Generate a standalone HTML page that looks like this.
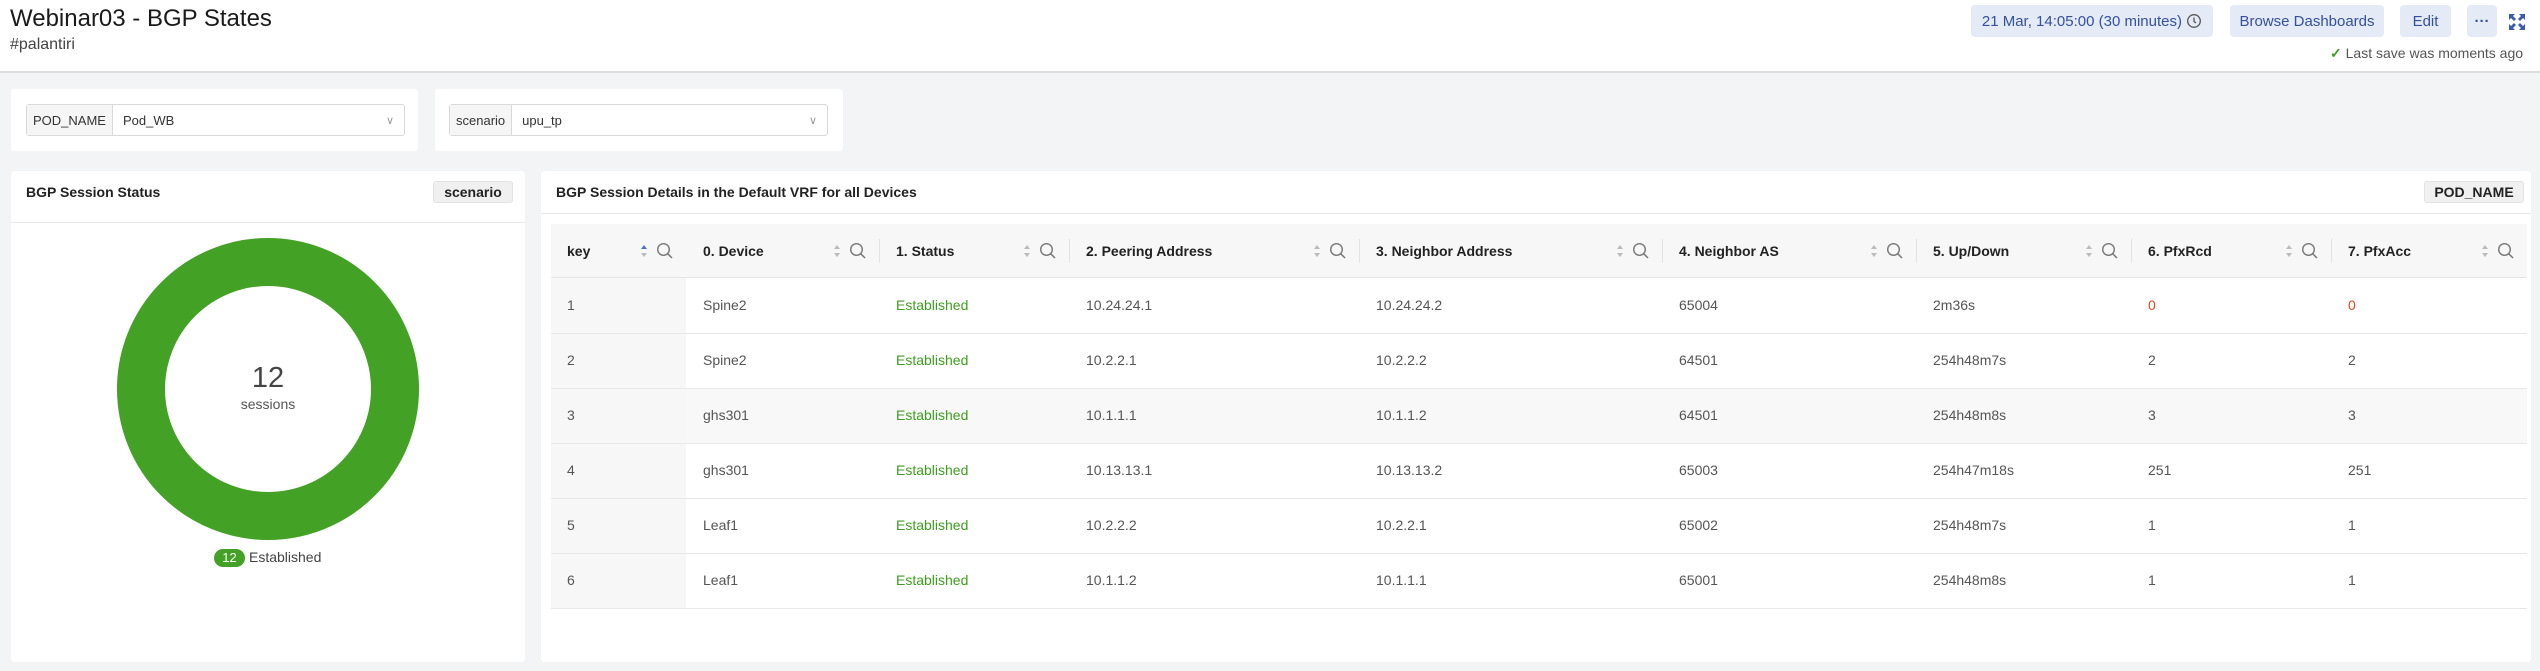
<!DOCTYPE html>
<html><head><meta charset="utf-8"><style>
*{box-sizing:border-box;margin:0;padding:0}
body{width:2540px;height:671px;background:#f3f4f6;font-family:"Liberation Sans",sans-serif;position:relative;overflow:hidden;color:#333}
.a{position:absolute}
.hdr{left:0;top:0;width:2540px;height:73px;background:#fff;border-bottom:2px solid #dcdcdf}
.btn{background:#e4eaf6;color:#34509e;border-radius:4px;font-size:15px;display:flex;align-items:center;justify-content:center;height:32px;top:5px}
.card{background:#fff;border-radius:4px}
.inp{border:1px solid #d9d9d9;border-radius:3px;height:32px;top:104px;background:#fff;font-size:13px}
.lbl{background:#f5f5f5;border-right:1px solid #d9d9d9;height:100%;display:flex;align-items:center;padding:0 6px;color:#333}
.badge{background:#f0f0f0;border:1px solid #e3e3e3;border-radius:3px;font-size:14px;font-weight:bold;color:#222;height:22px;top:181px;display:flex;align-items:center;justify-content:center}
.ptitle{font-size:14px;font-weight:bold;color:#222;top:184px}
.cell{font-size:14px;color:#555;white-space:nowrap}
.th{font-size:14px;font-weight:bold;color:#222;top:243px;white-space:nowrap}
.g{color:#3d9f1e}.r{color:#e4471f}
.hl{height:1px;background:#e8e8e8}
</style></head><body>
<div class="a hdr"></div>
<div class="a" style="left:10px;top:5px;font-size:24px;color:#1a1a1a">Webinar03 - BGP States</div>
<div class="a" style="left:10px;top:36px;font-size:16px;color:#444">#palantiri</div>
<div class="a btn" style="left:1971px;width:242px">21 Mar, 14:05:00 (30 minutes)&nbsp;<svg width="16" height="16" viewBox="0 0 16 16"><circle cx="8" cy="8" r="6.3" fill="none" stroke="#555" stroke-width="1.3"/><path d="M8 4.5V8.5L10 10" fill="none" stroke="#555" stroke-width="1.3"/></svg></div>
<div class="a btn" style="left:2230px;width:154px">Browse Dashboards</div>
<div class="a btn" style="left:2400px;width:51px">Edit</div>
<div class="a btn" style="left:2467px;width:30px;font-weight:bold">···</div>
<svg class="a" style="left:2508px;top:13px" width="18" height="18" viewBox="0 0 18 18"><path d="M1 1h6L5 3l3 3-2 2-3-3-2 2zM17 1v6l-2-2-3 3-2-2 3-3-2-2zM1 17v-6l2 2 3-3 2 2-3 3 2 2zM17 17h-6l2-2-3-3 2-2 3 3 2-2z" fill="#3a5bb0"/></svg>
<div class="a" style="left:2330px;top:45px;font-size:14px;color:#555;white-space:nowrap"><span style="color:#3d9f1e;font-weight:bold">✓</span> Last save was moments ago</div>

<div class="a card" style="left:11px;top:89px;width:407px;height:62px"></div>
<div class="a inp" style="left:26px;width:379px;display:flex"><div class="lbl">POD_NAME</div><div style="padding:0 10px;display:flex;align-items:center;flex:1;justify-content:space-between">Pod_WB<span style="color:#999;font-size:11px">∨</span></div></div>
<div class="a card" style="left:435px;top:89px;width:408px;height:62px"></div>
<div class="a inp" style="left:449px;width:379px;display:flex"><div class="lbl">scenario</div><div style="padding:0 10px;display:flex;align-items:center;flex:1;justify-content:space-between">upu_tp<span style="color:#999;font-size:11px">∨</span></div></div>

<div class="a card" style="left:11px;top:171px;width:514px;height:491px"></div>
<div class="a ptitle" style="left:26px">BGP Session Status</div>
<div class="a badge" style="left:433px;width:80px">scenario</div>
<div class="a hl" style="left:11px;top:222px;width:514px"></div>
<div class="a" style="left:117px;top:238px;width:302px;height:302px;border-radius:50%;border:48px solid #43a125"></div>
<div class="a" style="left:168px;top:362px;width:200px;text-align:center;font-size:29px;color:#444">12</div>
<div class="a" style="left:168px;top:396px;width:200px;text-align:center;font-size:14px;color:#555">sessions</div>
<div class="a" style="left:214px;top:549px;width:31px;height:18px;border-radius:9px;background:#43a125;color:#fff;font-size:13px;text-align:center;line-height:18px">12</div>
<div class="a" style="left:249px;top:549px;font-size:14px;color:#444">Established</div>

<div class="a card" style="left:541px;top:171px;width:1990px;height:491px"></div>
<div class="a ptitle" style="left:556px">BGP Session Details in the Default VRF for all Devices</div>
<div class="a badge" style="left:2424px;width:100px">POD_NAME</div>
<div class="a hl" style="left:541px;top:213px;width:1990px"></div>
<div class="a" style="left:551px;top:224px;width:1976px;height:54px;background:#f7f7f7;border-bottom:1px solid #e5e5e5"></div>
<div class="a" style="left:551px;top:278px;width:135px;height:330px;background:#f7f7f7"></div>
<div class="a" style="left:686px;top:388px;width:1841px;height:55px;background:#f8f8f8"></div>
<div class="a hl" style="left:551px;top:333px;width:1976px"></div>
<div class="a hl" style="left:551px;top:388px;width:1976px"></div>
<div class="a hl" style="left:551px;top:443px;width:1976px"></div>
<div class="a hl" style="left:551px;top:498px;width:1976px"></div>
<div class="a hl" style="left:551px;top:553px;width:1976px"></div>
<div class="a hl" style="left:551px;top:608px;width:1976px"></div>
<div id="tbl"></div>
<script>
var cols=[551,686,879,1069,1359,1662,1916,2131,2331,2527];
var heads=["key","0. Device","1. Status","2. Peering Address","3. Neighbor Address","4. Neighbor AS","5. Up/Down","6. PfxRcd","7. PfxAcc"];
var rows=[["1","Spine2","Established","10.24.24.1","10.24.24.2","65004","2m36s","0","0"],
["2","Spine2","Established","10.2.2.1","10.2.2.2","64501","254h48m7s","2","2"],
["3","ghs301","Established","10.1.1.1","10.1.1.2","64501","254h48m8s","3","3"],
["4","ghs301","Established","10.13.13.1","10.13.13.2","65003","254h47m18s","251","251"],
["5","Leaf1","Established","10.2.2.2","10.2.2.1","65002","254h48m7s","1","1"],
["6","Leaf1","Established","10.1.1.2","10.1.1.1","65001","254h48m8s","1","1"]];
var h="";
for(var i=0;i<9;i++){var x=cols[i]+(i==0?16:17),e=cols[i+1];
h+='<div class="a th" style="left:'+x+'px">'+heads[i]+'</div>';
var sc=i==0?'#4a73d9':'#bbb';
h+='<svg class="a" style="left:'+(e-46)+'px;top:244px" width="8" height="14" viewBox="0 0 8 14"><path d="M4 1L7 5H1z" fill="'+sc+'"/><path d="M4 13L7 9H1z" fill="#bbb"/></svg>';
h+='<svg class="a" style="left:'+(e-30)+'px;top:242px" width="18" height="18" viewBox="0 0 18 18"><circle cx="7.5" cy="7.5" r="5.8" fill="none" stroke="#777" stroke-width="1.4"/><path d="M11.7 11.7L16 16" stroke="#777" stroke-width="1.5"/></svg>';
if(i>0&&i<8)h+='<div class="a" style="left:'+e+'px;top:239px;width:1px;height:24px;background:#e3e3e3"></div>';
for(var r=0;r<6;r++){var v=rows[r][i],c="cell";if(i==2)c+=" g";if((i==7||i==8)&&v=="0")c+=" r";
h+='<div class="a '+c+'" style="left:'+x+'px;top:'+(297+r*55)+'px">'+v+'</div>';}}
document.getElementById("tbl").innerHTML=h;
</script>
</body></html>
